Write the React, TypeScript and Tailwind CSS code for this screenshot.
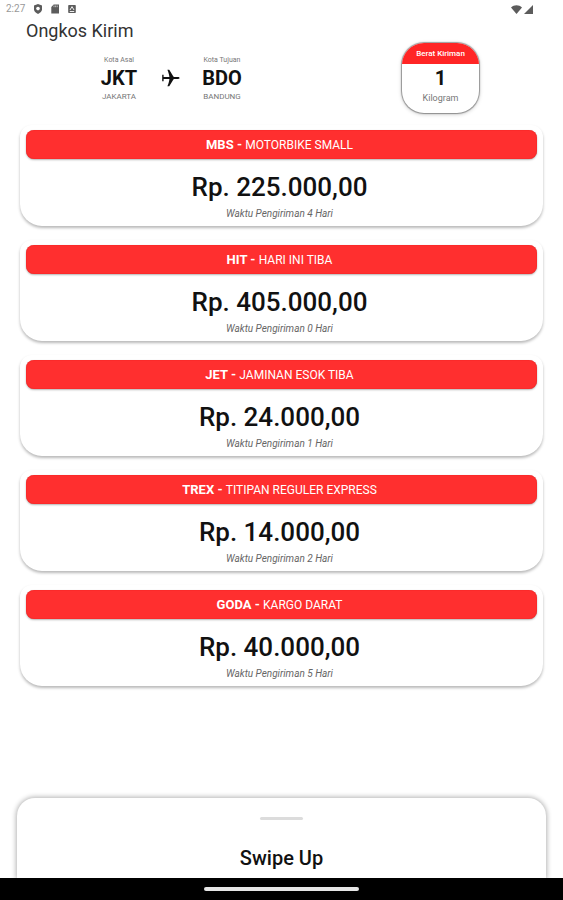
type Rate = { code: string; name: string; price: string; days: number };

const rates: Rate[] = [
  { code: 'MBS', name: 'MOTORBIKE SMALL', price: 'Rp. 225.000,00', days: 4 },
  { code: 'HIT', name: 'HARI INI TIBA', price: 'Rp. 405.000,00', days: 0 },
  { code: 'JET', name: 'JAMINAN ESOK TIBA', price: 'Rp. 24.000,00', days: 1 },
  { code: 'TREX', name: 'TITIPAN REGULER EXPRESS', price: 'Rp. 14.000,00', days: 2 },
  { code: 'GODA', name: 'KARGO DARAT', price: 'Rp. 40.000,00', days: 5 },
];

function StatusBar() {
  return (
    <div className="flex h-[18px] items-center justify-between pr-[30px] pl-[6px] text-[#5c5c5c]">
      <div className="flex items-center">
        <span className="w-[27px] text-[10px] leading-none text-[#999]">2:27</span>
        <svg className="h-[10px] w-[10px]" viewBox="0 0 10 10" aria-hidden="true">
          <path d="M5 0 9 1.5v3.8C9 7.5 7.3 9 5 10 2.7 9 1 7.5 1 5.3V1.5Z" fill="currentColor" />
          <circle cx="5" cy="4.6" r="1.8" fill="#fff" />
        </svg>
        <svg className="ml-[7px] h-[10px] w-[10px]" viewBox="0 0 10 10" aria-hidden="true">
          <path d="M3.7.5H9v9H1.3V3Z" fill="currentColor" />
          <path d="M4 1.5v1.7M5.6 1.5v1.7M7.2 1.5v1.7" stroke="#fff" strokeWidth=".6" />
        </svg>
        <svg className="ml-[7px] h-[10px] w-[10px]" viewBox="0 0 10 10" aria-hidden="true">
          <rect x="1.2" y="1" width="7.6" height="8" rx=".8" fill="currentColor" />
          <path d="M3 6 5 2.6 7 6M2.8 7.5h4.4" stroke="#fff" strokeWidth=".9" fill="none" />
        </svg>
      </div>
      <div className="flex items-center gap-[2px]">
        <svg className="h-[9px] w-[11px]" viewBox="0 0 11 9" aria-hidden="true">
          <path d="M0 2.4C3-.4 8-.4 11 2.4L5.5 9Z" fill="currentColor" />
        </svg>
        <svg className="h-[9px] w-[9px]" viewBox="0 0 9 9" aria-hidden="true">
          <path d="M9 0v9H0Z" fill="currentColor" />
        </svg>
      </div>
    </div>
  );
}

function City({ label, code, name }: { label: string; code: string; name: string }) {
  return (
    <div className="flex w-12 flex-col items-center whitespace-nowrap">
      <span className="text-[7px] leading-[10px] text-[#777]">{label}</span>
      <span className="text-xl leading-[26px] font-bold">{code}</span>
      <span className="text-[8px] leading-[12px] text-[#777]">{name}</span>
    </div>
  );
}

function RateCard({ rate }: { rate: Rate }) {
  return (
    <li className="rounded-t-[12px] rounded-b-[22px] bg-white px-[6px] py-[5px] text-center shadow-[0_2px_3px_rgba(0,0,0,0.28)]">
      <h2 className="h-[29px] rounded-lg bg-[#ff2f2f] pr-1 text-xs leading-[29px] text-white shadow-[0_1px_2px_rgba(0,0,0,0.3),inset_0_0_1px_#d80000]">
        <span className="text-[13px] font-bold">{rate.code} - </span>
        {rate.name}
      </h2>
      <p className="mt-[11px] pr-1 text-[26px] leading-[34px] font-medium text-[#111]">{rate.price}</p>
      <p className="mt-[3px] pr-1 text-[10px] leading-[14px] text-[#666] italic">Waktu Pengiriman {rate.days} Hari</p>
    </li>
  );
}

export default function App() {
  return (
    <div className="flex min-h-screen flex-col bg-white font-['Roboto',sans-serif] text-[#111]">
      <StatusBar />
      <header>
        <h1 className="pl-[26px] text-lg leading-[26px] text-[#333]">Ongkos Kirim</h1>
        <div className="-mt-px flex items-start justify-between pr-[84px] pl-[95px]">
          <div className="flex items-center pt-3">
            <City label="Kota Asal" code="JKT" name="JAKARTA" />
            <svg className="mx-[18px] -mt-[2px] h-[18px] w-[19px]" viewBox="0 0 19 18" aria-hidden="true">
              <path
                d="M18.5 9c0-.6-.6-.9-1.4-.9h-4.3C11.6 6.4 9.6 3 8.2.8H6.4C7.2 2.6 8.2 5.600 8.400 8.100H2.600V5.800H1.200v6.400h1.400V9.900h5.800C8.200 12.400 7.200 15.400 6.400 17.200h1.800c1.400-2.200 3.400-5.600 4.600-7.300h4.300c.8 0 1.400-.3 1.400-.9Z"
                fill="#111"
              />
            </svg>
            <City label="Kota Tujuan" code="BDO" name="BANDUNG" />
          </div>
          <section className="flex h-[70px] w-[77px] flex-col items-center overflow-hidden rounded-[22px] bg-white shadow-[0_0_1px_1px_rgba(0,0,0,0.35),0_1px_4px_rgba(0,0,0,0.25)]">
            <h2 className="w-full bg-[#ff2525] text-center text-[8px] leading-[21px] font-medium text-white">
              Berat Kiriman
            </h2>
            <span className="mt-[2px] text-xl leading-[24px] font-bold">1</span>
            <span className="mt-px text-[9px] leading-[14px] text-[#777]">Kilogram</span>
          </section>
        </div>
      </header>

      <ul className="mx-5 mt-3 flex flex-col gap-[14px]">
        {rates.map((rate) => (
          <RateCard key={rate.code} rate={rate} />
        ))}
      </ul>

      <footer className="mt-auto pt-8">
        <button
          type="button"
          className="mx-auto flex h-[80px] w-[calc(100%-34px)] flex-col items-center rounded-t-[18px] bg-white pt-[19px] shadow-[0_0_5px_1px_rgba(0,0,0,0.3)]"
        >
          <span className="h-[3px] w-[43px] rounded-full bg-[#dcdcdc]" />
          <span className="mt-[25px] text-xl leading-[26px] font-medium">Swipe Up</span>
        </button>
        <div className="relative flex h-[22px] items-center justify-center bg-black">
          <span className="h-1 w-[155px] rounded-full bg-[#e6e6e6]" />
        </div>
      </footer>
    </div>
  );
}
